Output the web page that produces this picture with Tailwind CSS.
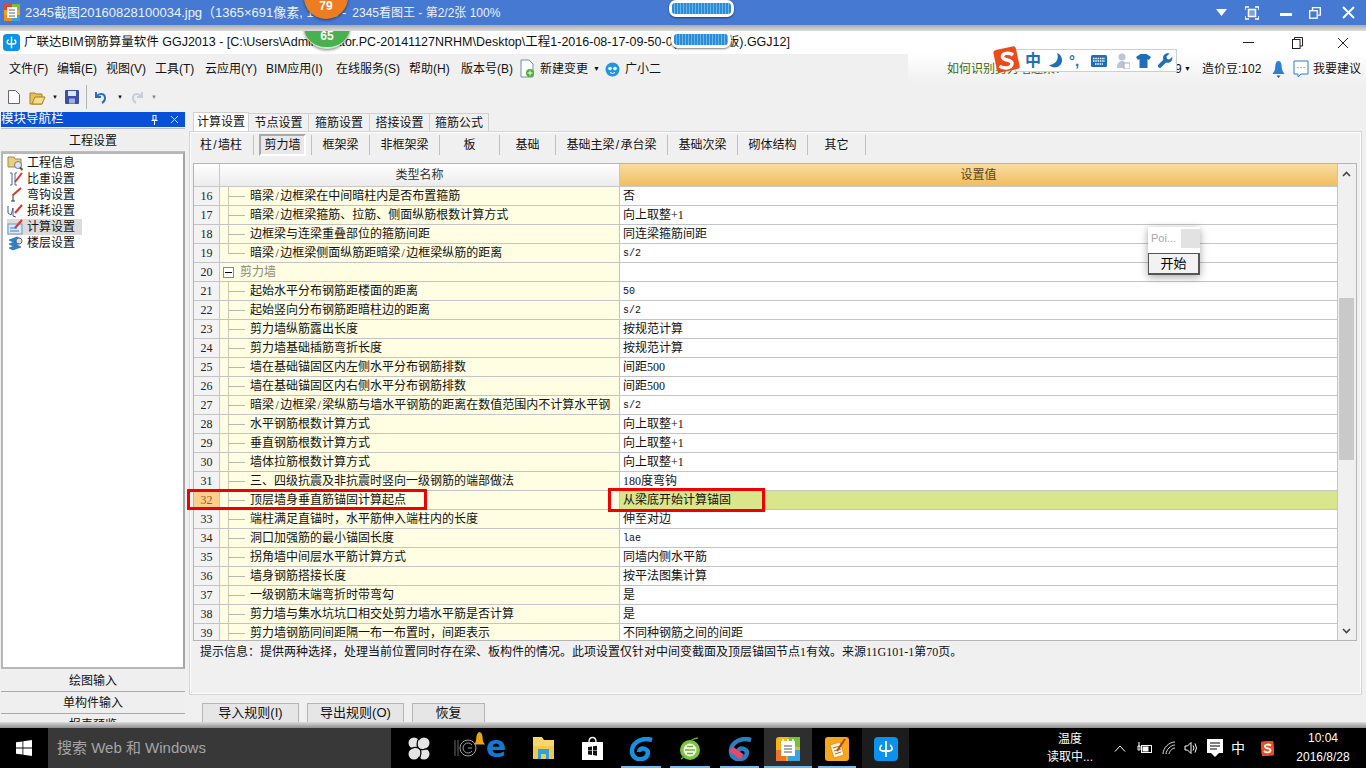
<!DOCTYPE html>
<html lang="zh-CN">
<head>
  <meta charset="UTF-8">
  <title>GGJ2013</title>
  <script src="https://cdn.jsdelivr.net/npm/@tailwindcss/browser@4"></script>
</head>
<body class="bg-black">
<div class="relative w-[1366px] h-[768px] overflow-hidden flex flex-col bg-[#f0f0f0] text-[12px] text-[#111] font-['Liberation_Sans','Noto_Sans_CJK_SC',sans-serif]">

  <!-- 2345 viewer bar -->
  <div class="h-[25px] shrink-0 bg-[#4679d1] flex items-center text-[13px] text-white/90">
    <svg class="ml-[4px] mr-[5px]" width="16" height="17" viewBox="0 0 16 17"><rect width="16" height="17" rx="2" fill="#f6a21c"/><rect width="8" height="6" fill="#e8432e"/><rect x="8" width="8" height="6" fill="#7cbf3a"/><rect y="11" width="8" height="6" fill="#f08a24"/><rect x="8" y="11" width="8" height="6" fill="#3aa2dc"/><rect x="3" y="3" width="10" height="11" fill="#fff"/><path d="M5 6h6M5 9h6M5 12h6" stroke="#666"/></svg>
    <span>2345截图20160828100034.jpg（1365×691像素, 16KB -</span>
    <span class="ml-[6px] text-[12px]">2345看图王 - 第2/2张 100%</span>
    <div class="ml-auto flex items-center text-white">
      <svg class="mr-[18px]" width="11" height="7" viewBox="0 0 11 7"><path d="M0 0h11L5.500 7z" fill="#fff"/></svg>
      <svg class="mr-[21px]" width="14" height="14" viewBox="0 0 14 14" fill="none" stroke="#fff" stroke-width="1.500"><path d="M0 4V1h4M10 1h4v3M14 10v3h-4M4 13H0v-3"/><rect x="3.500" y="3.500" width="7" height="7" fill="#fff" fill-opacity=".3"/></svg>
      <div class="w-[12px] h-[3px] bg-white mt-[3px] mr-[17px]"></div>
      <svg class="mr-[21px]" width="12" height="12" viewBox="0 0 12 12" fill="none" stroke="#fff" stroke-width="1.300"><rect x=".7" y="3.700" width="7.500" height="7.500"/><path d="M3.500 3.500V.7h7.800v7.500H8.500"/></svg>
      <svg class="mr-[11px]" width="13" height="13" viewBox="0 0 13 13" stroke="#fff" stroke-width="2"><path d="M1 1l11 11M12 1L1 12"/></svg>
    </div>
  </div>
  <div class="h-[6px] shrink-0 bg-gradient-to-b from-[#a9a9a9] to-[#dedede]"></div>

  <!-- GGJ title bar -->
  <div class="h-[23px] shrink-0 bg-white flex items-center text-[12.5px]">
    <svg class="ml-[3px] mr-[4px]" width="17" height="17" viewBox="0 0 24 24" fill="none"><rect width="24" height="24" rx="5" fill="#0b93e8"/><path d="M12 4v16M8 8c-3 2-3 6 1 6h6c4 0 4-4 1-6" stroke="#fff" stroke-width="2"/></svg>
    <span>广联达BIM钢筋算量软件 GGJ2013 - [C:\Users\Administrator.PC-20141127NRHM\Desktop\工程1-2016-08-17-09-50-0(钢筋备份版).GGJ12]</span>
    <div class="ml-auto flex items-center">
      <div class="w-[11px] h-px bg-[#222] mr-[38px]"></div>
      <svg class="mr-[34px]" width="11" height="12" viewBox="0 0 11 12" fill="none" stroke="#222"><rect x=".5" y="2.500" width="7.500" height="9"/><path d="M2.500 2.500V.5h8v8.500H8"/></svg>
      <svg class="mr-[17px]" width="12" height="12" viewBox="0 0 12 12" stroke="#222"><path d="M1 1l10 10M11 1L1 11"/></svg>
    </div>
  </div>

  <!-- menu bar -->
  <div class="h-[30px] shrink-0 flex items-center pl-[9px] relative">
    <span class="w-[48px]">文件(F)</span>
    <span class="w-[49px]">编辑(E)</span>
    <span class="w-[49px]">视图(V)</span>
    <span class="w-[50px]">工具(T)</span>
    <span class="w-[61px]">云应用(Y)</span>
    <span class="w-[70px]">BIM应用(I)</span>
    <span class="w-[73px]">在线服务(S)</span>
    <span class="w-[52px]">帮助(H)</span>
    <span class="w-[59px]">版本号(B)</span>
    <svg class="mr-[5px]" width="15" height="20" viewBox="0 0 15 20"><path d="M1 1h8l4 4v13H1z" fill="#fff" stroke="#6d8fb3"/><circle cx="10" cy="14" r="4" fill="#4fae2f"/><path d="M10 11.500v5M7.500 14h5" stroke="#fff"/></svg>
    <span class="w-[53px]">新建变更</span>
    <span class="text-[7px] w-[12px]">▼</span>
    <svg class="mr-[5px]" width="15" height="15" viewBox="0 0 15 15"><circle cx="7.500" cy="7.500" r="7" fill="#1f97e0"/><circle cx="5" cy="6.500" r="1.800" fill="#fff"/><circle cx="10" cy="6.500" r="1.800" fill="#fff"/><path d="M5 10.500q2.500 2 5 0" stroke="#fff" fill="none"/></svg>
    <span>广小二</span>
    <div class="ml-auto flex items-center h-full w-[458px] bg-gradient-to-b from-white to-[#f0f0f0] pl-[39px]">
      <span class="text-[#3d6b0c] w-[228px]">如何识别剪力墙连梁？</span>
      <span class="w-[9px]">9</span>
      <span class="text-[7px] w-[18px]">▼</span>
      <span class="w-[70px]">造价豆:102</span>
      <svg class="mr-[8px]" width="13" height="19" viewBox="0 0 13 19"><path d="M6.500 1C3.500 1 3.500 5 3 9c-.3 2-2 4-2.500 5h12c-.5-1-2.200-3-2.500-5-.5-4-.5-8-3.500-8z" fill="#2b7fd4"/><path d="M4.500 15.500h4l-2 2.500z" fill="#1f5a9c"/></svg>
      <svg class="mr-[4px]" width="16" height="19" viewBox="0 0 16 19" fill="#fff" stroke="#2b7fd4"><path d="M1 1h14v13H8l-3 3v-3H1z"/><path d="M4.500 7.500h1M7.500 7.500h1M10.500 7.500h1"/></svg>
      <span>我要建议</span>
    </div>
  </div>

  <!-- toolbar -->
  <div class="h-[26px] shrink-0 flex items-center pl-[8px]">
    <svg class="mr-[9px]" width="12" height="14" viewBox="0 0 12 14"><path d="M.5.500h7l4 4v9H.5z" fill="#fff" stroke="#667"/></svg>
    <svg class="mr-[3px]" width="17" height="15" viewBox="0 0 17 15"><path d="M1 3h5l1 1h6v10H1z" fill="#e8c15c" stroke="#a47f24"/><path d="M3 14l3-7h10l-3 7z" fill="#f6dc8c" stroke="#a47f24"/></svg>
    <span class="text-[6px] w-[16px] pl-[3px]">▼</span>
    <svg class="mr-[7px]" width="14" height="14" viewBox="0 0 14 14"><rect width="14" height="14" rx="1" fill="#3b4fa5"/><rect x="3" y="1" width="8" height="5" fill="#dfe6f6"/><rect x="4" y="8.500" width="6" height="5" fill="#9fb0dc"/></svg>
    <div class="w-px h-[24px] bg-[#b5b5b5] mr-[7px]"></div>
    <svg class="mr-[7px]" width="13" height="14" viewBox="0 0 13 14" fill="none" stroke="#2f6db5" stroke-width="2"><path d="M2 2v5h5M2.500 6.500C5 3 11 3 11 8c0 2-1 4-3 5"/></svg>
    <span class="text-[6px] w-[17px] pl-[3px]">▼</span>
    <svg class="mr-[4px]" width="13" height="14" viewBox="0 0 13 14" fill="none" stroke="#c9ced6" stroke-width="2"><path d="M11 2v5H6M10.500 6.500C8 3 2 3 2 8c0 2 1 4 3 5"/></svg>
    <span class="text-[6px] text-[#888] pl-[3px]">▼</span>
  </div>

  <!-- body -->
  <div class="h-[612px] shrink-0 flex">
    <!-- nav panel -->
    <div class="w-[187px] shrink-0 pt-[2px] pl-[1px] pr-[2px] flex flex-col overflow-hidden text-[12px]">
      <div class="h-[15px] shrink-0 bg-[#0850d8] text-white flex items-center pr-[6px]">
        <span class="text-[12.5px]">模块导航栏</span>
        <svg class="ml-auto mr-[12px]" width="7" height="10" viewBox="0 0 7 10" stroke="#fff" fill="none"><path d="M1.500.500h4M2 1v4h3V1M.5 5.500h6M3.500 6v4"/></svg>
        <svg width="9" height="9" viewBox="0 0 9 9" stroke="#d5e2fb"><path d="M1 1l7 7M8 1L1 8"/></svg>
      </div>
      <div class="h-[24px] shrink-0 mt-px pt-px flex items-center justify-center bg-[#efefef] border-y border-[#bdbdbd]">工程设置</div>
      <div class="h-[517px] shrink-0 bg-white border-2 border-[#b7b7b7] border-r-[#a5a5a5] pt-px pl-[4px] leading-[16px]">
        <div class="flex items-center h-[16px] gap-[3px]">
          <svg width="17" height="16" viewBox="0 0 17 16"><path d="M1 2h6l1 2h6v8H1z" fill="#eccf7e" stroke="#9d8748"/><circle cx="11" cy="10" r="3.500" fill="#dbe7f4" stroke="#6a7f99"/><path d="M13 12.500l2.500 2.500" stroke="#6a4b22" stroke-width="2"/></svg>
          <span>工程信息</span>
        </div>
        <div class="flex items-center h-[16px] gap-[3px]">
          <svg width="17" height="16" viewBox="0 0 17 16" fill="none"><path d="M3 2h2v12H3M10 2H8v12h2" stroke="#4c6a85"/><path d="M8 11l7-9" stroke="#d9362e" stroke-width="2"/></svg>
          <span>比重设置</span>
        </div>
        <div class="flex items-center h-[16px] gap-[3px]">
          <svg width="17" height="16" viewBox="0 0 17 16" fill="none"><path d="M6 7v7M4 14h4" stroke="#333"/><path d="M6 8l8-7" stroke="#d9362e" stroke-width="2"/></svg>
          <span>弯钩设置</span>
        </div>
        <div class="flex items-center h-[16px] gap-[3px]">
          <svg width="17" height="16" viewBox="0 0 17 16" fill="none"><path d="M1 3v7l3 2 2-7v8l3 1" stroke="#3a5d8a"/><path d="M8 10l7-8" stroke="#d9362e" stroke-width="2"/></svg>
          <span>损耗设置</span>
        </div>
        <div class="flex items-center h-[16px] gap-[3px] bg-[#dcdcdc] w-[75px]">
          <svg width="17" height="16" viewBox="0 0 17 16" fill="none"><rect x="1" y="5" width="14" height="10" fill="#d7e8f8" stroke="#6f97c4"/><path d="M3 9h7M3 12h9" stroke="#4f7fb5"/><path d="M8 9l7-8" stroke="#d9362e" stroke-width="2"/></svg>
          <span>计算设置</span>
        </div>
        <div class="flex items-center h-[16px] gap-[3px]">
          <svg width="17" height="16" viewBox="0 0 17 16"><path d="M2 5l8-3 4 2-8 3zM2 9l8-3 4 2-8 3zM2 13l8-3 4 2-8 3z" fill="#2f82cf" stroke="#165a9c" stroke-width=".6"/><circle cx="12" cy="6" r="3" fill="#dfe3e8" stroke="#667"/></svg>
          <span>楼层设置</span>
        </div>
      </div>
      <div class="h-[22px] shrink-0 mt-px flex items-center justify-center border-b border-[#a9a9a9] bg-[#efefef]">绘图输入</div>
      <div class="h-[22px] shrink-0 flex items-center justify-center border-b border-[#a9a9a9] bg-[#efefef]">单构件输入</div>
      <div class="h-[22px] shrink-0 flex items-center justify-center bg-[#efefef]">报表预览</div>
    </div>

    <!-- settings -->
    <div class="flex-1 min-w-0 pl-[2px] pr-[4px] pt-[2px] flex flex-col">
      <div class="h-[19px] shrink-0 flex items-end pl-[4px]">
        <div class="w-[56px] h-[19px] pb-px bg-white border-t border-x border-[#d0d0d0] flex items-center justify-center">计算设置</div>
        <div class="w-[60px] h-[18px] pt-px border-r border-t border-[#d0d0d0] flex items-center justify-center">节点设置</div>
        <div class="w-[61px] h-[18px] pt-px border-r border-t border-[#d0d0d0] flex items-center justify-center">箍筋设置</div>
        <div class="w-[60px] h-[18px] pt-px border-r border-t border-[#d0d0d0] flex items-center justify-center">搭接设置</div>
        <div class="w-[59px] h-[18px] pt-px border-r border-t border-[#d0d0d0] flex items-center justify-center">箍筋公式</div>
      </div>
      <div class="flex-1 min-h-0 bg-white border border-[#d4d4d4] mb-[7px] flex flex-col">
        <div class="bg-[#f0f0f0] flex flex-col h-full border border-white">
          <div class="h-[24px] shrink-0 flex items-center">
            <span class="w-[60px] mr-[2px] text-center">柱<span class="px-[1.400px]">/</span>墙柱</span>
            <span class="w-px h-[20px] bg-[#c0c0c0] mr-[5px]"></span>
            <span class="w-[47px] h-[22px] flex items-center justify-center bg-[#e8e8e8] border-2 border-[#a8a8a8] border-r-white border-b-white">剪力墙</span>
            <span class="w-px h-[20px] bg-[#c0c0c0] ml-[5px]"></span>
            <span class="w-[57px] text-center">框架梁</span>
            <span class="w-px h-[20px] bg-[#c0c0c0]"></span>
            <span class="w-[69px] text-center">非框架梁</span>
            <span class="w-px h-[20px] bg-[#c0c0c0]"></span>
            <span class="w-[59px] text-center">板</span>
            <span class="w-px h-[20px] bg-[#c0c0c0]"></span>
            <span class="w-[55px] text-center">基础</span>
            <span class="w-px h-[20px] bg-[#c0c0c0]"></span>
            <span class="w-[111px] text-center">基础主梁<span class="px-[1.400px]">/</span>承台梁</span>
            <span class="w-px h-[20px] bg-[#c0c0c0]"></span>
            <span class="w-[69px] text-center">基础次梁</span>
            <span class="w-px h-[20px] bg-[#c0c0c0]"></span>
            <span class="w-[69px] text-center">砌体结构</span>
            <span class="w-px h-[20px] bg-[#c0c0c0]"></span>
            <span class="w-[57px] text-center">其它</span>
            <span class="w-px h-[20px] bg-[#c0c0c0]"></span>
          </div>

          <!-- table -->
          <div class="h-[478px] shrink-0 mt-[6px] ml-[2px] mr-[3px] border border-[#b5b5b5] flex bg-white">
            <div class="flex-1 min-w-0 flex flex-col overflow-hidden">
              <div class="h-[23px] shrink-0 flex border-b border-[#c8c8c8]">
                <div class="w-[26px] bg-gradient-to-b from-white to-[#ececec] border-r border-[#c8c8c8]"></div>
                <div class="w-[400px] bg-gradient-to-b from-white to-[#ececec] border-r border-[#c8c8c8] flex items-center justify-center text-[#333]">类型名称</div>
                <div class="flex-1 bg-gradient-to-b from-[#f8dca0] to-[#f0bd5e] flex items-center justify-center text-[#5a4518]">设置值</div>
              </div>
              <div id="rows" class="flex flex-col font-['Liberation_Serif','Noto_Sans_CJK_SC',serif]"></div>
            </div>
            <!-- scrollbar -->
            <div class="w-[19px] shrink-0 bg-[#f0f0f0] border-l border-[#c4c4c4] flex flex-col items-start pl-px">
              <svg class="mt-[7px] ml-[3px]" width="9" height="6" viewBox="0 0 9 6" fill="none" stroke="#444" stroke-width="1.600"><path d="M1 5l3.500-3.500L8 5"/></svg>
              <div class="w-[15px] h-[162px] mt-[121px] bg-[#c9c9c9]"></div>
              <svg class="mt-auto mb-[6px] ml-[3px]" width="9" height="6" viewBox="0 0 9 6" fill="none" stroke="#444" stroke-width="1.600"><path d="M1 1l3.500 3.500L8 1"/></svg>
            </div>
          </div>
          <div class="pl-[9px] pt-[3px] leading-[16px] font-['Liberation_Serif','Noto_Sans_CJK_SC',serif]">提示信息：提供两种选择，处理当前位置同时存在梁、板构件的情况。此项设置仅针对中间变截面及顶层锚固节点1有效。来源11G101-1第70页。</div>
        </div>
      </div>
      <div class="h-[20px] shrink-0 flex items-end gap-[8px] pl-[13px] text-[13px] overflow-hidden">
        <div class="w-[97px] h-[19px] bg-[#e6e6e6] border border-b-0 border-[#b5b5b5] flex items-center justify-center">导入规则(I)</div>
        <div class="w-[97px] h-[19px] bg-[#e6e6e6] border border-b-0 border-[#b5b5b5] flex items-center justify-center">导出规则(O)</div>
        <div class="w-[73px] h-[19px] bg-[#e6e6e6] border border-b-0 border-[#b5b5b5] flex items-center justify-center">恢复</div>
      </div>
    </div>
  </div>

  <div class="h-[6px] shrink-0 bg-gradient-to-b from-[#dcdcdc] to-[#8f8f8f]"></div>

  <!-- taskbar -->
  <div class="flex-1 bg-black flex items-stretch text-white">
    <div class="w-[48px] shrink-0 flex items-center justify-center">
      <svg width="16" height="16" viewBox="0 0 16 16" fill="#fff"><path d="M0 2.300l6.500-.9v6.200H0zM7.300 1.300L16 0v7.600H7.300zM0 8.400h6.500v6.200L0 13.700zM7.300 8.400H16V16l-8.700-1.300z"/></svg>
    </div>
    <div class="w-[343px] shrink-0 bg-[#383838] flex items-center pl-[9px] text-[15px] text-[#a5a5a5]">搜索 Web 和 Windows</div>
    <div class="w-[128px] shrink-0 flex items-center pl-[17px]">
      <svg class="mr-[24px]" width="22" height="23" viewBox="0 0 22 23" fill="#e4e4e4"><circle cx="6" cy="6" r="5.500"/><circle cx="16" cy="6" r="5.500"/><circle cx="6" cy="17" r="5.500"/><circle cx="16" cy="17" r="5.500"/><rect x="6" y="6" width="10" height="11"/><path d="M11 11.500C8 10 9 4 11 1M11 11.500c2 2 8 1 10-1M11 11.500c3 1.500 2 7.500 0 10.500M11 11.500c-2-2-8-1-10 1" fill="none" stroke="#000" stroke-width="1.200"/></svg>
      <div class="relative w-[50px] h-[26px]">
        <svg class="absolute left-0 top-[4px]" width="24" height="18" viewBox="0 0 24 18" fill="none" stroke="#a0a0a0"><circle cx="14" cy="9" r="8"/><path d="M18 6a5 5 0 1 0 0 6M14 9h4"/><path d="M1 1v16M4 1v16" stroke="#666"/></svg>
        <svg class="absolute left-[19px] top-[-3px]" width="13" height="15" viewBox="0 0 13 15"><path d="M6.500 0C3 1 3.500 6 3 9c-.3 1.500-1.500 2.500-2 3.500h11c-.5-1-1.700-2-2-3.500-.5-3 0-8-3.500-9z" fill="#eaa416"/></svg>
        <span class="absolute left-[32px] top-[-6px] text-[30px] leading-[36px] font-bold text-[#1379d8] font-['DejaVu_Sans',sans-serif]">e</span>
      </div>
    </div>
    <div class="w-[49px] shrink-0 flex items-center justify-center">
      <svg width="21" height="22" viewBox="0 0 21 22"><path d="M0 0h9l2 3h10v19H0z" fill="#f6d56e"/><rect y="9" width="21" height="13" fill="#f2c84d"/><rect x="5" y="12" width="11" height="10" fill="#2ba3e3"/><rect x="8" y="17" width="5" height="5" fill="#f2c84d"/></svg>
    </div>
    <div class="w-[49px] shrink-0 flex items-center justify-center">
      <svg width="21" height="24" viewBox="0 0 21 24" fill="none"><path d="M7 6c0-6 7-6 7 0" stroke="#eee" stroke-width="1.500"/><path d="M0 6h21v18H0z" fill="#fff"/><path d="M6 11l4-.6v4H6zM11 10.300l4-.6v4.700h-4zM6 15h4v4l-4-.6zM11 15h4v4.700l-4-.6z" fill="#111"/></svg>
    </div>
    <div class="w-[48px] shrink-0 flex flex-col items-center justify-end relative">
      <svg class="mb-[7px]" width="24" height="24" viewBox="0 0 24 24" fill="none"><path d="M23 3C13 0 4 5 3 13c-.5 7 5 10 10 9 6-1 8-8 3-10-4-1.500-6 1-6 3" stroke="#1592e6" stroke-width="4.500"/></svg>
      <div class="absolute bottom-0 inset-x-[4px] h-[2px] bg-[#76b9ed]"></div>
    </div>
    <div class="w-[50px] shrink-0 flex flex-col items-center justify-end relative">
      <svg class="mb-[7px]" width="24" height="24" viewBox="0 0 24 24" fill="none"><circle cx="12" cy="13" r="10" fill="#7cc63c"/><path d="M20 1Q14 2 13 4" stroke="#5fa52b" stroke-width="1.500"/><path d="M3 22q2-1 3-3" stroke="#5fa52b" stroke-width="1.500"/><circle cx="12" cy="13" r="6.500" fill="#f4f9ee"/><path d="M7 13h10M9 9.500h6M9 16.500h6" stroke="#6bb52e" stroke-width="1.500"/></svg>
      <div class="absolute bottom-0 inset-x-[5px] h-[2px] bg-[#76b9ed]"></div>
    </div>
    <div class="w-[49px] shrink-0 flex flex-col items-center justify-end relative">
      <svg class="mb-[7px]" width="24" height="24" viewBox="0 0 24 24" fill="none"><path d="M23 3C13 0 4 5 3 13c-.5 7 5 10 10 9 6-1 8-8 3-10-4-1.500-6 1-6 3" stroke="#2a7fc0" stroke-width="4.500"/><path d="M3 12l11 8" stroke="#e8476f" stroke-width="6"/></svg>
      <div class="absolute bottom-0 inset-x-[5px] h-[2px] bg-[#76b9ed]"></div>
    </div>
    <div class="w-[48px] shrink-0 bg-[#2e2e2e] flex flex-col items-center justify-end relative">
      <svg class="mb-[7px]" width="24" height="24" viewBox="0 0 24 24"><rect width="24" height="24" rx="3" fill="#f6b21c"/><rect x="12" width="12" height="10" fill="#7cbf3a"/><rect y="13" width="10" height="11" fill="#f0752c"/><rect x="12" y="13" width="12" height="11" fill="#3aa2dc"/><rect x="5" y="4" width="14" height="15" fill="#fff"/><path d="M7 2v4M12 2v4M17 2v4" stroke="#fff" stroke-width="1.500"/><path d="M8 9h8M8 12h8M8 15h8" stroke="#555"/></svg>
      <div class="absolute bottom-0 inset-x-0 h-[2px] bg-[#76b9ed]"></div>
    </div>
    <div class="w-[50px] shrink-0 flex flex-col items-center justify-end relative">
      <svg class="mb-[7px]" width="24" height="24" viewBox="0 0 24 24"><rect width="24" height="24" rx="3" fill="#f7a71d"/><path d="M5 8l10-3 4 13-10 3z" fill="#fdf2d8" stroke="#c77a16" stroke-width=".6"/><path d="M8 11l7-2M9 14l7-2M10 17l6-2" stroke="#9a7a3a"/><path d="M12 14L20 2" stroke="#b8431a" stroke-width="2"/></svg>
      <div class="absolute bottom-0 inset-x-[6px] h-[2px] bg-[#76b9ed]"></div>
    </div>
    <div class="w-[47px] shrink-0 bg-[#1c1c1c] flex flex-col items-center justify-end">
      <svg class="mb-[7px]" width="24" height="24" viewBox="0 0 24 24" fill="none"><rect width="24" height="24" rx="4" fill="#0a92ec"/><path d="M12 4v16M8 8c-3 2-3 6 1 6h6c4 0 4-4 1-6" stroke="#fff" stroke-width="1.800"/></svg>
    </div>
    <!-- tray -->
    <div class="flex-1 min-w-0 flex items-center text-[13px]">
      <div class="w-[60px] ml-[131px] shrink-0 text-center leading-[18px] text-[12px]">温度<br>读取中...</div>
      <svg class="ml-[14px] shrink-0" width="12" height="7" viewBox="0 0 12 7" fill="none" stroke="#fff"><path d="M1 6.500l5-5.500 5 5.500"/></svg>
      <svg class="ml-[11px] shrink-0" width="15" height="13" viewBox="0 0 15 13" fill="none" stroke="#fff"><rect x="4.500" y="3.500" width="10" height="7"/><rect x="6" y="5" width="5" height="4" fill="#fff"/><path d="M2 0v5M1 4h2v4H1z"/></svg>
      <svg class="ml-[10px] shrink-0" width="14" height="14" viewBox="0 0 14 14" fill="none" stroke="#ddd"><path d="M1 13C1 7 7 1 13 1M4 13c0-4 5-9 9-9M7 13c0-2 3-6 6-6"/></svg>
      <svg class="ml-[8px] shrink-0" width="13" height="14" viewBox="0 0 13 14" fill="none" stroke="#fff"><path d="M1 5h2.500L7 1.500v11L3.500 9H1zM9 4.500q2 2.500 0 5M11 2.500q3 4.500 0 9"/></svg>
      <svg class="ml-[10px] shrink-0" width="16" height="19" viewBox="0 0 16 19"><path d="M0 0h16v14h-4l-4 4-4-4H0z" fill="#fff"/><path d="M3 4h10M3 7h10M3 10h7" stroke="#000"/></svg>
      <span class="ml-[8px] w-[14px] shrink-0 text-[14px]">中</span>
      <svg class="ml-[16px] shrink-0" width="13" height="15" viewBox="0 0 13 15"><rect width="13" height="15" rx="2" fill="#ee4d1e" transform="rotate(-6 6 7)"/><path d="M10 4.500C7 2.500 3 4 4 6s6 1 5.500 3.500S5 12 3 10" fill="none" stroke="#fff" stroke-width="1.800"/></svg>
      <div class="w-[64px] ml-auto mr-[11px] shrink-0 text-center leading-[19px] text-[12px]">10:04<br>2016/8/28</div>
    </div>
  </div>

  <!-- overlays: floating badges, red markers, popup, IME bar -->
  <div class="absolute left-[304px] top-[-25px] w-[44px] h-[44px] rounded-full bg-[#ee7d22] shadow-[0_1px_3px_rgba(0,0,0,.5)] flex items-end justify-center pb-[4px] text-white text-[12px] font-bold">79</div>
  <div class="absolute left-[304px] top-[5px] w-[46px] h-[44px] rounded-full bg-[#48b04f] border-b-2 border-white/70 shadow-[0_1px_3px_rgba(0,0,0,.5)] flex items-end justify-center pb-[2px] text-white text-[12px] font-bold [clip-path:inset(26px_-4px_-4px_-4px)]">65</div>
  <div class="absolute left-[669px] top-0 w-[65px] h-[17px] bg-white rounded-[7px] shadow-[0_1px_2px_rgba(0,0,0,.5)] p-[3px]"><div class="h-full rounded-[3px] bg-[repeating-linear-gradient(90deg,#2a8bd6_0_2px,#6cb6ea_2px_3px)]"></div></div>
  <div class="absolute left-[671px] top-[31px] w-[60px] h-[17px] bg-white rounded-[7px] shadow-[0_1px_2px_rgba(0,0,0,.5)] p-[3px]"><div class="h-full rounded-[3px] bg-[repeating-linear-gradient(90deg,#2a8bd6_0_2px,#6cb6ea_2px_3px)]"></div></div>

  <div class="absolute left-[187px] top-[489px] w-[240px] h-[21px] border-[3px] border-[#f00000]"></div>
  <div class="absolute left-[608px] top-[488px] w-[157px] h-[24px] border-[3px] border-[#f00000]"></div>

  <div class="absolute left-[1148px] top-[227px] w-[52px] h-[48px] bg-white shadow-[0_2px_8px_rgba(0,0,0,.35)]">
    <div class="h-[23px] flex items-center pl-[3px] text-[11px] text-[#a8a8a8]">Poi...<div class="ml-auto w-[19px] h-[19px] bg-[#e2e2e2]"></div></div>
    <div class="h-[22px] mt-[3px] bg-[#f2f2f2] border border-[#555] border-r-2 border-b-2 flex items-center justify-center text-[13px] text-black">开始</div>
  </div>

  <div class="absolute left-[991px] top-[49px] w-[186px] h-[23px] flex items-center">
    <div class="absolute left-[24px] top-0 right-0 h-[23px] bg-white border border-[#c3d1e4]"></div>
    <svg class="absolute left-[1px] top-[-4px]" width="29" height="29" viewBox="0 0 29 29"><rect x="3" y="3" width="23" height="23" rx="3" fill="#ed4a1c" transform="rotate(-12 14.500 14.500)"/><path d="M21 10c-4-3-11-2-10.500 2s10.500 2 9.500 7-9 5-12.500 2" fill="none" stroke="#fff" stroke-width="3.500"/></svg>
    <div class="relative flex items-center pl-[34px] text-[#1e6fb8]">
      <span class="text-[16px] font-bold w-[16px] mr-[8px] leading-[20px]">中</span>
      <svg class="mr-[6px]" width="14" height="15" viewBox="0 0 14 15" fill="#1e6fb8"><path d="M8 0c2 5 0 11-8 12 4 4 12 3 13-4 .4-4-2-7-5-8z"/></svg>
      <span class="w-[16px] mr-[6px] text-[15px] font-bold leading-[14px]">°,</span>
      <svg class="mr-[9px]" width="16" height="12" viewBox="0 0 16 12"><rect width="16" height="12" rx="1.500" fill="#1e6fb8"/><path d="M2 3.500h12M2 6h12M4 9h8" stroke="#fff" stroke-dasharray="1.500 .8" stroke-width="1.300"/></svg>
      <svg class="mr-[6px]" width="14" height="16" viewBox="0 0 14 16" fill="#b9c6d6"><circle cx="6" cy="4" r="3.500"/><path d="M1 15c0-5 2-7 5-7s4 2 4 7z"/><rect x="8" y="10" width="6" height="6" fill="#fff" stroke="#9fb0c4"/></svg>
      <svg class="mr-[7px]" width="15" height="14" viewBox="0 0 15 14" fill="#1e6fb8"><path d="M4.500 0h6L15 3l-2 3-1.500-1v9h-8V5L2 6 0 3z"/></svg>
      <svg width="15" height="15" viewBox="0 0 15 15" fill="#1e6fb8"><path d="M14.500 3.500l-3 3-2.500-.5L8.500 3.500l3-3C8.500-.5 5 1.500 5 5c0 .7.100 1.200.3 1.700L.5 11.500c-.8.800-.8 2 0 2.800s2 .8 2.800 0l4.800-4.800c.5.200 1 .3 1.700.3 3.500 0 5.500-3.500 4.200-6.300z"/></svg>
    </div>
  </div>
</div>

<script>
  const rows = [
    ['16', '暗梁/边框梁在中间暗柱内是否布置箍筋', '否'],
    ['17', '暗梁/边框梁箍筋、拉筋、侧面纵筋根数计算方式', '向上取整+1'],
    ['18', '边框梁与连梁重叠部位的箍筋间距', '同连梁箍筋间距'],
    ['19', '暗梁/边框梁侧面纵筋距暗梁/边框梁纵筋的距离', 's/2'],
    ['20', '剪力墙', ''],
    ['21', '起始水平分布钢筋距楼面的距离', '50'],
    ['22', '起始竖向分布钢筋距暗柱边的距离', 's/2'],
    ['23', '剪力墙纵筋露出长度', '按规范计算'],
    ['24', '剪力墙基础插筋弯折长度', '按规范计算'],
    ['25', '墙在基础锚固区内左侧水平分布钢筋排数', '间距500'],
    ['26', '墙在基础锚固区内右侧水平分布钢筋排数', '间距500'],
    ['27', '暗梁/边框梁/梁纵筋与墙水平钢筋的距离在数值范围内不计算水平钢', 's/2'],
    ['28', '水平钢筋根数计算方式', '向上取整+1'],
    ['29', '垂直钢筋根数计算方式', '向上取整+1'],
    ['30', '墙体拉筋根数计算方式', '向上取整+1'],
    ['31', '三、四级抗震及非抗震时竖向一级钢筋的端部做法', '180度弯钩'],
    ['32', '顶层墙身垂直筋锚固计算起点', '从梁底开始计算锚固'],
    ['33', '端柱满足直锚时，水平筋伸入端柱内的长度', '伸至对边'],
    ['34', '洞口加强筋的最小锚固长度', 'lae'],
    ['35', '拐角墙中间层水平筋计算方式', '同墙内侧水平筋'],
    ['36', '墙身钢筋搭接长度', '按平法图集计算'],
    ['37', '一级钢筋末端弯折时带弯勾', '是'],
    ['38', '剪力墙与集水坑坑口相交处剪力墙水平筋是否计算', '是'],
    ['39', '剪力墙钢筋同间距隔一布一布置时，间距表示', '不同种钢筋之间的间距']
  ];

  // half-width latin in the old app is wider than Liberation's, pad the slash
  const wideSlash = (s) => s.replaceAll('/', '<span class="px-[1.400px]">/</span>');

  document.getElementById('rows').innerHTML = rows.map(([num, name, value]) => {
    const picked = num === '32';
    const group = num === '20';
    const numBg = picked ? 'bg-[#f9cf8e] text-[#b5541a]' : 'bg-[#f3f3f3]';
    const valueBg = picked ? 'bg-[#d9e68b]' : 'bg-white';
    const valueFont = /^[\x00-\x7f]+$/.test(value) ? "font-['Liberation_Mono',monospace] text-[10px]" : '';
    const stem = num === '19' ? 'h-1/2' : 'h-full';
    const tree = group
      ? '<span class="w-[11px] h-[11px] ml-px mr-[6px] border border-[#888] bg-white relative shrink-0"><span class="absolute left-[1px] right-[1px] top-[4px] h-px bg-black"></span></span><span class="text-[#8a8a7a]">' + name + '</span>'
      : '<span class="relative w-[26px] h-full shrink-0"><span class="absolute left-[6px] top-0 ' + stem + ' w-px bg-[#c9c9b8]"></span><span class="absolute left-[6px] w-[17px] top-1/2 h-px bg-[#b9b9a8]"></span></span><span class="ml-[2px] whitespace-nowrap">' + wideSlash(name) + '</span>';
    return '<div class="h-[19px] shrink-0 flex border-b border-[#c4c4c4] overflow-hidden">'
      + '<div class="w-[26px] shrink-0 border-r border-[#c4c4c4] flex items-center justify-center text-[#222] ' + numBg + '">' + num + '</div>'
      + '<div class="w-[400px] shrink-0 border-r border-[#c4c4c4] bg-[#fffde2] flex items-center pl-[2px] overflow-hidden">' + tree + '</div>'
      + '<div class="flex-1 flex items-center pl-[3px] ' + valueBg + ' ' + valueFont + '">' + value + '</div>'
      + '</div>';
  }).join('');
</script>
</body>
</html>
